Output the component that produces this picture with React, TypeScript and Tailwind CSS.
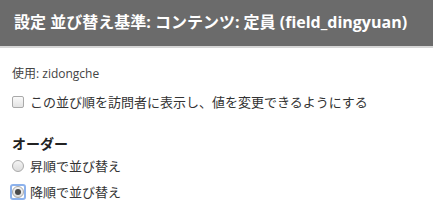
import React from "react";

export default function App() {
  return (
    <div className="w-[433px] h-[215px] bg-white overflow-hidden font-['Open_Sans','Noto_Sans_CJK_JP',sans-serif] text-[#333]">
      <div className="h-[48px] bg-[#6b6b6b] border-b-2 border-[#d6d6d6] px-[14px] pt-[11px]">
        <h1 className="text-[16px] font-bold leading-[22px] text-white whitespace-nowrap">
          設定 並び替え基準: コンテンツ: 定員 (field_dingyuan)
        </h1>
      </div>
      <div className="px-[12px] pt-[18px]">
        <p className="text-[12px] leading-[16px] text-[#444]">使用: zidongche</p>
        <label className="mt-[11px] flex items-center gap-[6px] text-[13px] leading-[18px]">
          <span className="w-[12px] h-[12px] rounded-[2px] border border-[#a9a9a9] bg-gradient-to-b from-[#fafafa] to-[#e3e3e3]" />
          この並び順を訪問者に表示し、値を変更できるようにする
        </label>
        <div className="mt-[24px] text-[14px] font-bold leading-[18px] text-[#222]">オーダー</div>
        <label className="mt-[4px] flex items-center gap-[6px] text-[13px] leading-[18px]">
          <span className="w-[12px] h-[12px] rounded-full border border-[#a9a9a9] bg-gradient-to-b from-[#f4f4f4] to-[#dcdcdc]" />
          昇順で並び替え
        </label>
        <label className="mt-[8px] flex items-center gap-[6px] text-[13px] leading-[18px]">
          <span className="w-[12px] h-[12px] flex items-center justify-center rounded-[1px] outline outline-2 outline-offset-0 outline-[#8db2ec]">
            <span className="w-[12px] h-[12px] flex items-center justify-center rounded-full border border-[#a9a9a9] bg-gradient-to-b from-[#f4f4f4] to-[#dcdcdc]">
              <span className="w-[6px] h-[6px] rounded-full bg-[#4a4a4a]" />
            </span>
          </span>
          降順で並び替え
        </label>
      </div>
    </div>
  );
}
